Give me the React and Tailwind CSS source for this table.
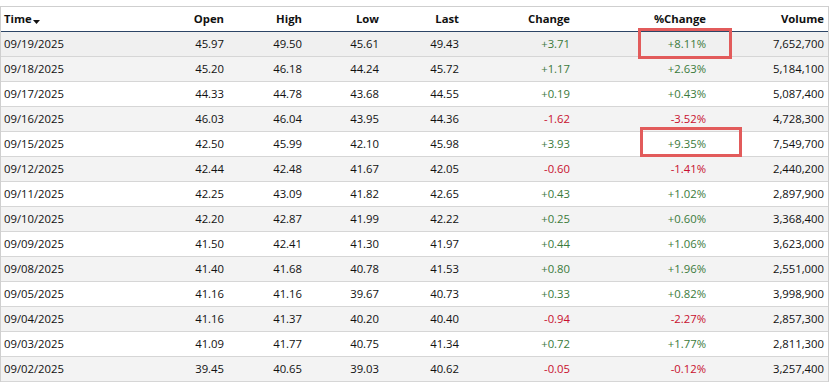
const rows = [
  ["09/19/2025", "45.97", "49.50", "45.61", "49.43", "+3.71", "+8.11%", "7,652,700"],
  ["09/18/2025", "45.20", "46.18", "44.24", "45.72", "+1.17", "+2.63%", "5,184,100"],
  ["09/17/2025", "44.33", "44.78", "43.68", "44.55", "+0.19", "+0.43%", "5,087,400"],
  ["09/16/2025", "46.03", "46.04", "43.95", "44.36", "-1.62", "-3.52%", "4,728,300"],
  ["09/15/2025", "42.50", "45.99", "42.10", "45.98", "+3.93", "+9.35%", "7,549,700"],
  ["09/12/2025", "42.44", "42.48", "41.67", "42.05", "-0.60", "-1.41%", "2,440,200"],
  ["09/11/2025", "42.25", "43.09", "41.82", "42.65", "+0.43", "+1.02%", "2,897,900"],
  ["09/10/2025", "42.20", "42.87", "41.99", "42.22", "+0.25", "+0.60%", "3,368,400"],
  ["09/09/2025", "41.50", "42.41", "41.30", "41.97", "+0.44", "+1.06%", "3,623,000"],
  ["09/08/2025", "41.40", "41.68", "40.78", "41.53", "+0.80", "+1.96%", "2,551,000"],
  ["09/05/2025", "41.16", "41.16", "39.67", "40.73", "+0.33", "+0.82%", "3,998,900"],
  ["09/04/2025", "41.16", "41.37", "40.20", "40.40", "-0.94", "-2.27%", "2,857,300"],
  ["09/03/2025", "41.09", "41.77", "40.75", "41.34", "+0.72", "+1.77%", "2,811,300"],
  ["09/02/2025", "39.45", "40.65", "39.03", "40.62", "-0.05", "-0.12%", "3,257,400"],
];

const headers = ["Open", "High", "Low", "Last", "Change", "%Change", "Volume"];
const cols = "grid grid-cols-[146px_80px_78px_77px_80px_111px_136px_118px]";

const changeColor = (v) => (v.startsWith("-") ? "text-[#c8102e]" : "text-[#3b7a3b]");

export default function App() {
  return (
    <div className="relative w-[832px] h-[387px] bg-white overflow-hidden text-[11.3px] text-[#111] font-['Open_Sans',sans-serif]">
      <div className="mt-[6px] w-[829px] border-t border-l border-r border-[#cfcfcf]">
        {/* header */}
        <div className={`${cols} h-[25px] items-center border-b border-[#2d4566] font-bold`}>
          <div className="pl-[3px] flex items-center">
            Time
            <svg width="7" height="4" viewBox="0 0 7 4" className="ml-[1px] mt-[5px]">
              <path d="M0 0h7L3.5 4z" fill="#111" />
            </svg>
          </div>
          {headers.map((h) => (
            <div key={h} className="text-right pr-[3px]">{h}</div>
          ))}
        </div>

        {rows.map((r, i) => (
          <div
            key={r[0]}
            className={`${cols} h-[25px] items-center border-b border-[#d6d6d6] ${
              i === 0 ? "bg-[#f0f0f0]" : i % 2 === 1 ? "bg-[#f3f3f3]" : "bg-white"
            }`}
          >
            <div className="pl-[3px]">{r[0]}</div>
            <div className="text-right pr-[3px]">{r[1]}</div>
            <div className="text-right pr-[3px]">{r[2]}</div>
            <div className="text-right pr-[3px]">{r[3]}</div>
            <div className="text-right pr-[3px]">{r[4]}</div>
            <div className={`text-right pr-[3px] ${changeColor(r[5])}`}>{r[5]}</div>
            <div className={`text-right pr-[3px] ${changeColor(r[6])}`}>{r[6]}</div>
            <div className="text-right pr-[3px]">{r[7]}</div>
          </div>
        ))}
      </div>

      {/* annotation boxes */}
      <div className="absolute left-[638px] top-[28px] w-[94px] h-[31px] border-[3px] border-[#e25b5b]" />
      <div className="absolute left-[640px] top-[127px] w-[102px] h-[30px] border-[3px] border-[#e25b5b]" />
    </div>
  );
}
